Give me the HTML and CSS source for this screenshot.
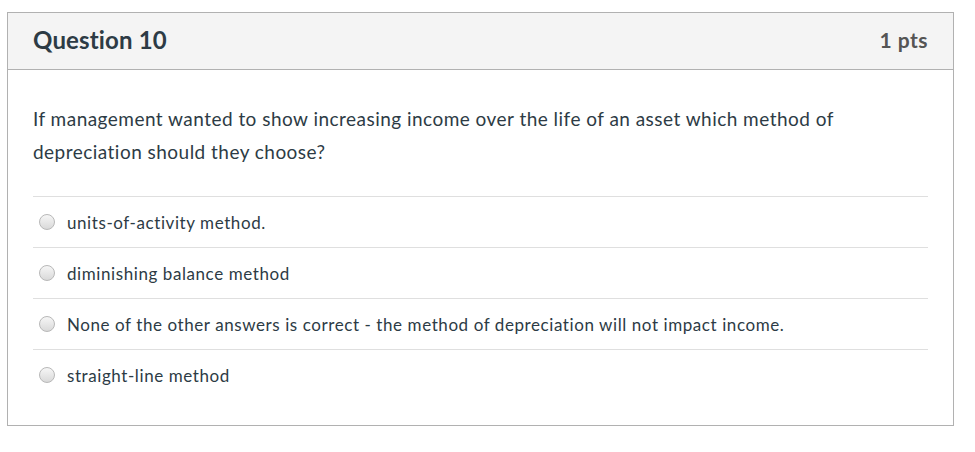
FILE: index.html
```html
<!DOCTYPE html>
<html>
<head>
<meta charset="utf-8">
<link rel="stylesheet" href="styles.css">
</head>
<body>
<div class="card">
  <div class="card-header">
    <h2 class="q-title">Question 10</h2>
    <span class="q-points">1 pts</span>
  </div>
  <div class="card-body">
    <p class="q-text">If management wanted to show increasing income over the life of an asset which method of depreciation should they choose?</p>
    <div class="answers">
      <label class="answer"><span class="radio"></span><span class="answer-text">units-of-activity method.</span></label>
      <label class="answer"><span class="radio"></span><span class="answer-text">diminishing balance method</span></label>
      <label class="answer"><span class="radio"></span><span class="answer-text">None of the other answers is correct - the method of depreciation will not impact income.</span></label>
      <label class="answer"><span class="radio"></span><span class="answer-text">straight-line method</span></label>
    </div>
  </div>
</div>
</body>
</html>
```
FILE: styles.css
```css
html, body {
  margin: 0;
  padding: 0;
  background: #ffffff;
}
body {
  padding: 12px 0 0 7px;
  font-family: Lato, "Open Sans", sans-serif;
  color: #2d3b45;
}
.card {
  width: 945px;
  border: 1px solid #b1b1b1;
  background: #fff;
}
.card-header {
  height: 52px;
  background: #f4f4f4;
  border-bottom: 1px solid #b1b1b1;
  display: flex;
  align-items: center;
  justify-content: space-between;
  padding: 0 25px 4px 25px;
  box-sizing: content-box;
}
.q-title {
  margin: 0;
  font-size: 24px;
  font-weight: 700;
  letter-spacing: 0.15px;
  color: #2d3b45;
}
.q-points {
  font-size: 21px;
  font-weight: 700;
  letter-spacing: 0.5px;
  color: #555555;
}
.card-body {
  padding: 32px 25px 25px 25px;
}
.q-text {
  margin: 0 0 28px 0;
  font-size: 19px;
  line-height: 33px;
  letter-spacing: 0.47px;
}
.answers {
  display: flex;
  flex-direction: column;
}
.answer {
  display: flex;
  align-items: center;
  height: 50px;
  border-top: 1px solid #dfdfdf;
  padding-left: 6px;
}
.radio {
  width: 16px;
  height: 16px;
  border-radius: 50%;
  border: 1px solid #b8b8b8;
  background: linear-gradient(#f6f6f6, #d9d9d9);
  box-sizing: border-box;
  flex: none;
}
.answer-text {
  margin-left: 12px;
  font-size: 17px;
  letter-spacing: 0.58px;
}
```
